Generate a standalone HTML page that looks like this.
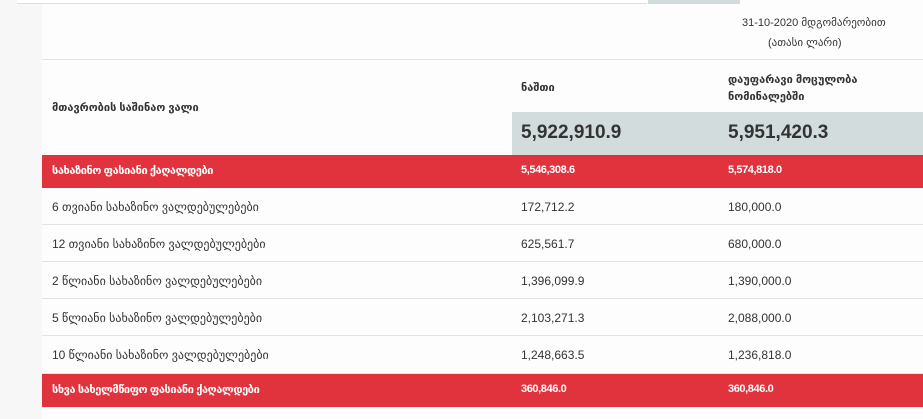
<!DOCTYPE html>
<html><head><meta charset="utf-8"><style>
*{margin:0;padding:0;box-sizing:border-box}
body{width:923px;height:419px;overflow:hidden;background:#fdfdfd;font-family:"Liberation Sans","DejaVu Sans",sans-serif;color:#333;position:relative}
.abs{position:absolute;white-space:nowrap}
.row{position:absolute;left:42px;width:881px;height:37px;border-bottom:1px solid #e2e2e2}
.row span{position:absolute;top:12px;font-size:12px}
.red{background:#e0333d;color:#fff;border:none}
.red span{font-weight:bold;font-size:11px;letter-spacing:-0.4px}
.c1{left:10px}.c2{left:479px}.c3{left:686px}
</style></head><body>
<div class="abs" style="left:0;top:0;width:42px;height:419px;background:#f7f7f7"></div>
<div class="abs" style="left:17px;top:0;width:630px;height:4px;border-bottom:1px solid #ddd;background:#fff"></div>
<div class="abs" style="left:648px;top:0;width:92px;height:4px;background:#d3dcdd"></div>
<div class="abs" style="left:742px;top:16px;font-size:11px">31-10-2020 მდგომარეობით</div>
<div class="abs" style="left:768px;top:36px;font-size:11px">(ათასი ლარი)</div>
<div class="abs" style="left:42px;top:59px;width:881px;height:1px;background:#e2e2e2"></div>
<div class="abs" style="left:52px;top:101px;font-size:11px;font-weight:bold">მთავრობის საშინაო ვალი</div>
<div class="abs" style="left:521px;top:81px;font-size:11px;font-weight:bold">ნაშთი</div>
<div class="abs" style="left:728px;top:72px;font-size:11px;font-weight:bold;line-height:17px">დაუფარავი მოცულობა<br>ნომინალებში</div>
<div class="abs" style="left:512px;top:112px;width:411px;height:43px;background:#d3dcdd"></div>
<div class="abs" style="left:521px;top:122px;font-size:19px;font-weight:bold;color:#333">5,922,910.9</div>
<div class="abs" style="left:728px;top:122px;font-size:19px;font-weight:bold;color:#333">5,951,420.3</div>
<div class="row red" style="top:155px;height:33px"><span class="c1" style="top:9px">სახაზინო ფასიანი ქაღალდები</span><span class="c2" style="top:9px">5,546,308.6</span><span class="c3" style="top:9px">5,574,818.0</span></div>
<div class="row" style="top:188px"><span class="c1">6 თვიანი სახაზინო ვალდებულებები</span><span class="c2">172,712.2</span><span class="c3">180,000.0</span></div>
<div class="row" style="top:225px"><span class="c1">12 თვიანი სახაზინო ვალდებულებები</span><span class="c2">625,561.7</span><span class="c3">680,000.0</span></div>
<div class="row" style="top:262px"><span class="c1">2 წლიანი სახაზინო ვალდებულებები</span><span class="c2">1,396,099.9</span><span class="c3">1,390,000.0</span></div>
<div class="row" style="top:299px"><span class="c1">5 წლიანი სახაზინო ვალდებულებები</span><span class="c2">2,103,271.3</span><span class="c3">2,088,000.0</span></div>
<div class="row" style="top:336px;height:38px"><span class="c1">10 წლიანი სახაზინო ვალდებულებები</span><span class="c2">1,248,663.5</span><span class="c3">1,236,818.0</span></div>
<div class="row red" style="top:374px;height:33px"><span class="c1" style="top:9px">სხვა სახელმწიფო ფასიანი ქაღალდები</span><span class="c2" style="top:9px">360,846.0</span><span class="c3" style="top:9px">360,846.0</span></div>
</body></html>
